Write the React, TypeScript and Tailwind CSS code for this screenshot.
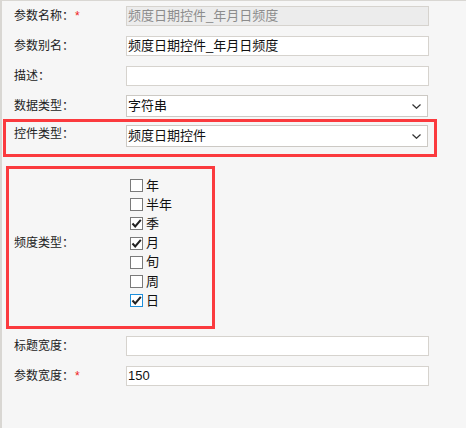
import React from "react";

const font = {
  fontFamily: '"Liberation Sans", "Noto Sans CJK SC", sans-serif',
};

const Chevron = () => (
  <svg width="9" height="5" viewBox="0 0 9 5" className="mr-[6px]">
    <polyline points="0.5,0.5 4.5,4.3 8.5,0.5" fill="none" stroke="#333" strokeWidth="1.2" />
  </svg>
);

const Label = ({ text, required }: { text: string; required?: boolean }) => (
  <div className="flex w-[112px] shrink-0 items-center text-[12px] text-[#222]">
    {text}：{required && <span className="ml-[1px] text-[#f02020]">*</span>}
  </div>
);

const TextInput = ({ value, disabled }: { value?: string; disabled?: boolean }) => (
  <div
    className={`flex h-[20px] w-[303px] items-center border border-[#d6d3ce] px-[1px] text-[13px] ${
      disabled ? "bg-[#ececec] text-[#8c8c8c]" : "bg-white text-[#111]"
    }`}
  >
    {value}
  </div>
);

const SelectBox = ({ value }: { value: string }) => (
  <div className="flex h-[22px] w-[302px] items-center justify-between border border-[#ccc9c4] bg-white pl-[1px] text-[13px] text-[#111]">
    <span>{value}</span>
    <Chevron />
  </div>
);

const Check = ({ checked, focus }: { checked?: boolean; focus?: boolean }) => (
  <div
    className={`relative h-[13px] w-[13px] shrink-0 border bg-white ${
      focus ? "border-[#1e90dc]" : "border-[#7a7a7a]"
    }`}
  >
    {checked && (
      <svg width="11" height="11" viewBox="0 0 11 11" className="absolute left-0 top-0">
        <polyline points="1.5,5.5 4.2,8.5 9.8,1.8" fill="none" stroke="#222" strokeWidth="2" />
      </svg>
    )}
  </div>
);

const freqs = [
  { name: "年", checked: false },
  { name: "半年", checked: false },
  { name: "季", checked: true },
  { name: "月", checked: true },
  { name: "旬", checked: false },
  { name: "周", checked: false },
  { name: "日", checked: true, focus: true },
];

export default function App() {
  return (
    <div
      style={font}
      className="h-[428px] w-[466px] overflow-hidden border-l-2 border-t border-[#d9d7d3] bg-[#f6f6f6]"
    >
      <div className="flex flex-col">
        <div className="mt-[5px] flex items-center pl-[12px]">
          <Label text="参数名称" required />
          <TextInput value="频度日期控件_年月日频度" disabled />
        </div>
        <div className="mt-[10px] flex items-center pl-[12px]">
          <Label text="参数别名" />
          <TextInput value="频度日期控件_年月日频度" />
        </div>
        <div className="mt-[10px] flex items-center pl-[12px]">
          <Label text="描述" />
          <TextInput />
        </div>
        <div className="mt-[9px] flex items-center pl-[12px]">
          <Label text="数据类型" />
          <SelectBox value="字符串" />
        </div>

        <div className="ml-[1px] mt-[2px] flex h-[38px] w-[434px] items-start border-[3px] border-[#fb3a3e] pl-[8px] pt-[3px]">
          <Label text="控件类型" />
          <SelectBox value="频度日期控件" />
        </div>

        <div className="ml-[4px] mt-[9px] flex h-[163px] w-[209px] items-center border-[3px] border-[#fb3a3e] pb-[9px] pl-[5px]">
          <div className="flex w-[116px] shrink-0 items-center text-[12px] text-[#222]">频度类型：</div>
          <div className="flex flex-col">
            {freqs.map((f) => (
              <div key={f.name} className="flex h-[19.2px] items-center gap-[3px] text-[13px] text-[#111]">
                <Check checked={f.checked} focus={f.focus} />
                <span>{f.name}</span>
              </div>
            ))}
          </div>
        </div>

        <div className="mt-[7px] flex items-center pl-[12px]">
          <Label text="标题宽度" />
          <TextInput />
        </div>
        <div className="mt-[10px] flex items-center pl-[12px]">
          <Label text="参数宽度" required />
          <TextInput value="150" />
        </div>
      </div>
    </div>
  );
}
